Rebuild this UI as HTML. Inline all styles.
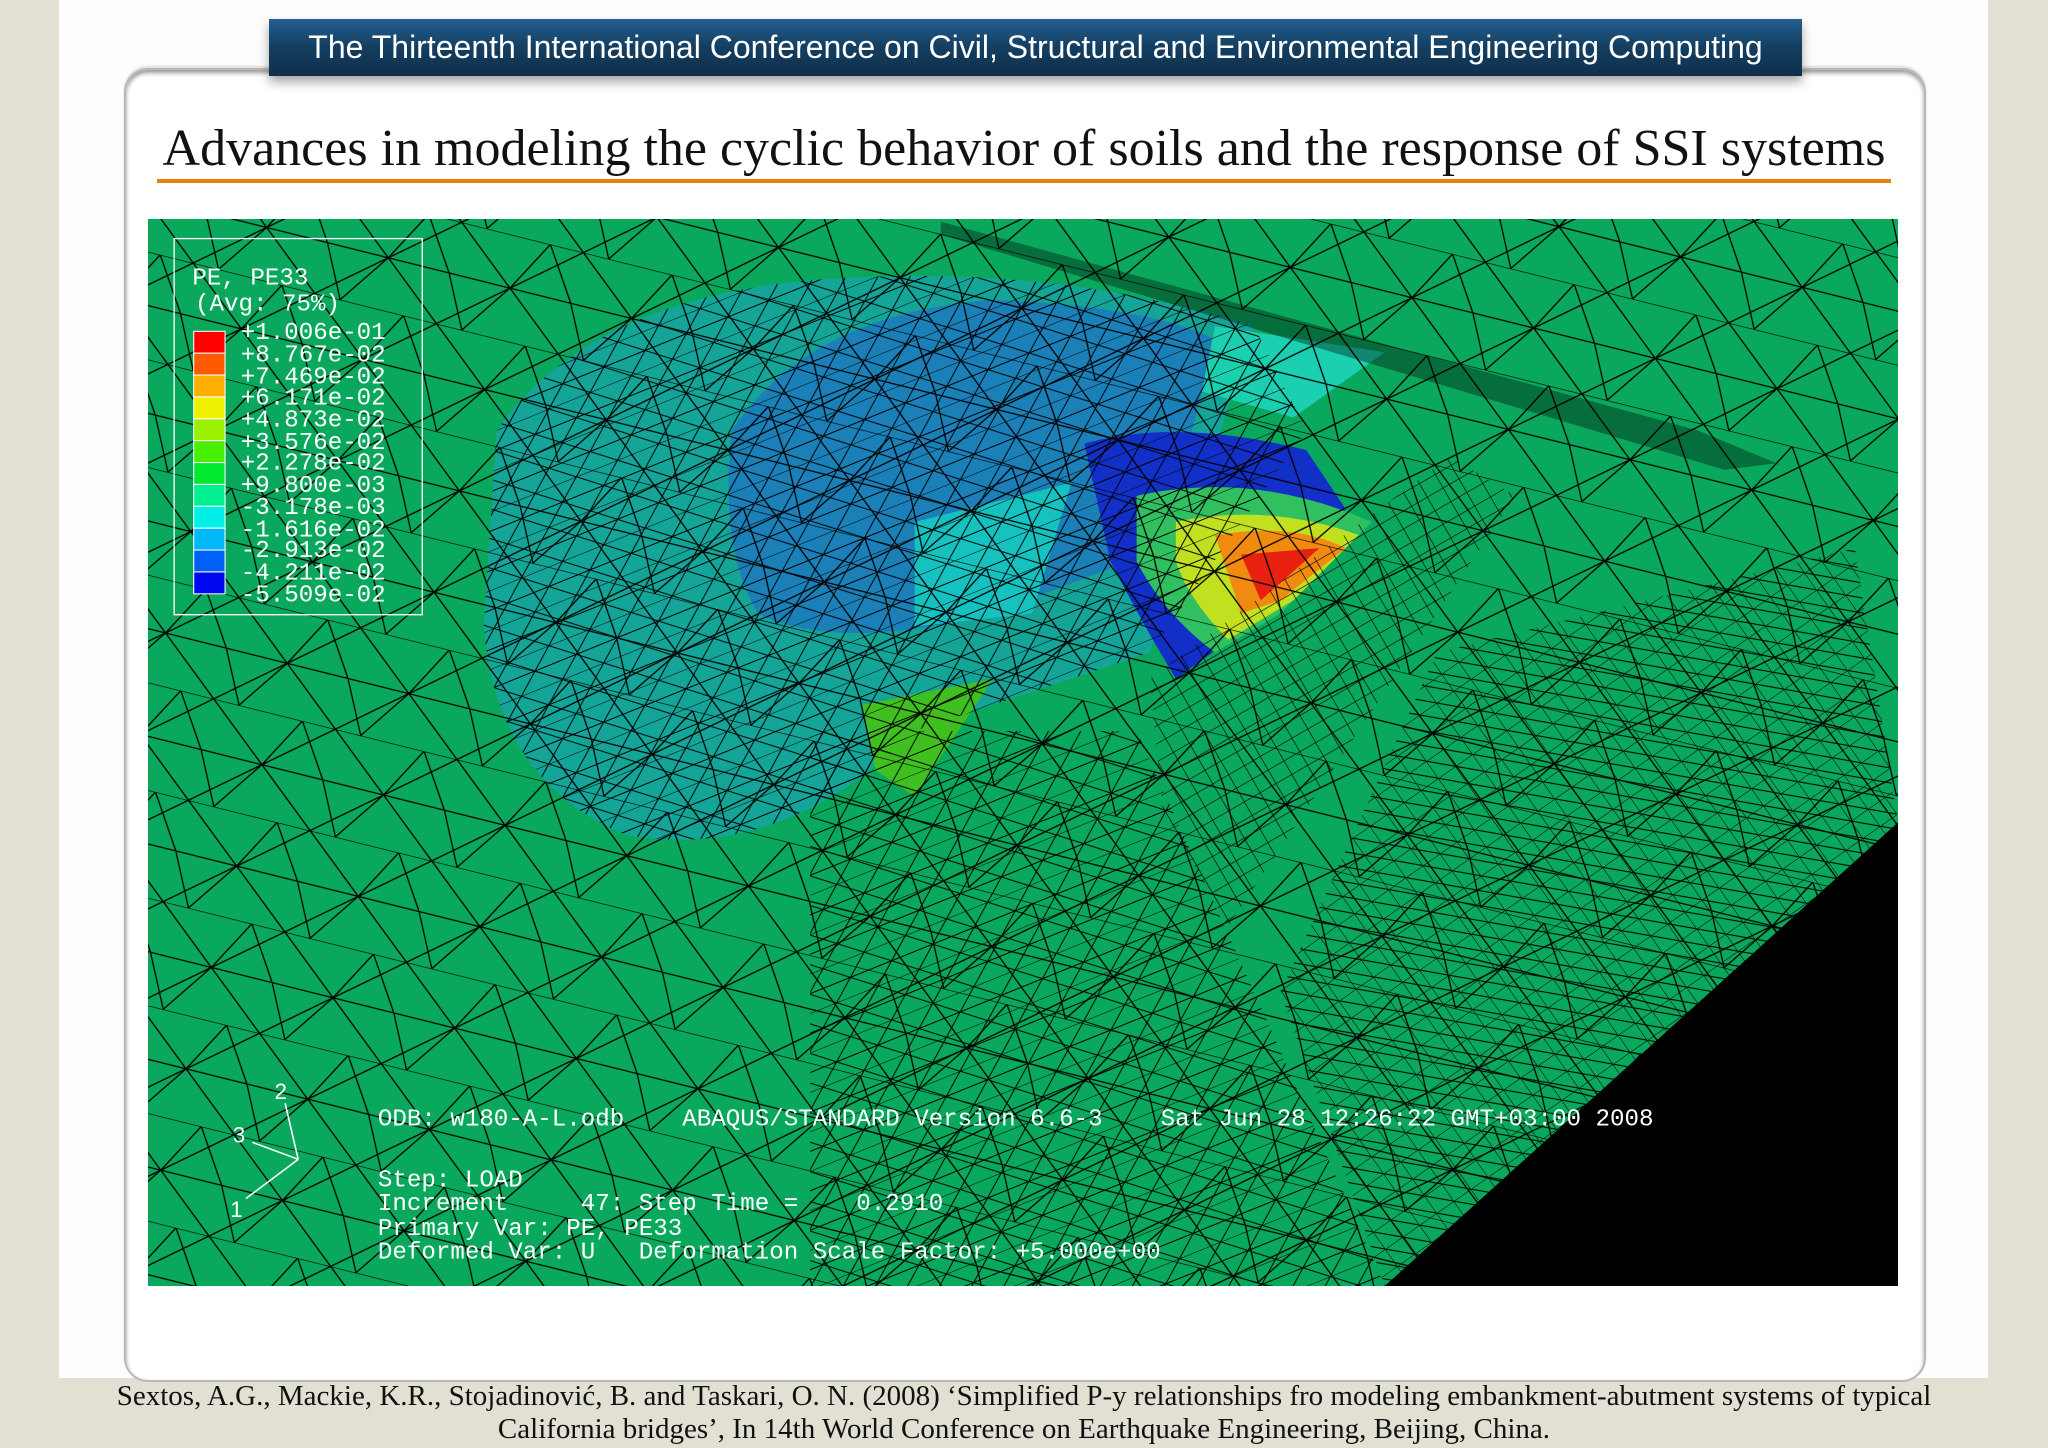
<!DOCTYPE html>
<html><head><meta charset="utf-8"><style>
html,body{margin:0;padding:0}
body{width:2048px;height:1448px;background:#e2dfd3;position:relative;overflow:hidden;font-family:"Liberation Sans",sans-serif}
.page{position:absolute;left:59px;top:0;width:1929px;height:1448px;background:#fdfdfd}
.card{position:absolute;left:124px;top:68px;width:1798px;height:1310px;background:#fff;border:2px solid #b8b8b8;border-radius:24px;box-shadow:0 3px 4px #999 inset, 0 -2px 2px #ddd}
.hdr{position:absolute;left:269px;top:19px;width:1533px;height:57px;background:linear-gradient(#235f8f,#143e60 50%,#0f2f4a);box-shadow:0 6px 10px rgba(0,0,0,.35);color:#fff;font-size:32px;line-height:57px;text-align:center;white-space:nowrap}
.title{position:absolute;left:124px;top:119px;width:1800px;text-align:center;font-family:"Liberation Serif",serif;font-size:52px;color:#111;white-space:nowrap}
.rule{position:absolute;left:157px;top:179px;width:1734px;height:4px;background:#e8801a}
.cite{position:absolute;left:40px;top:1380px;width:1968px;text-align:center;font-family:"Liberation Serif",serif;font-size:29px;line-height:33px;color:#111;white-space:nowrap}
.bottomgray{position:absolute;left:59px;top:1378px;width:1929px;height:70px;background:#e2dfd3}
</style></head><body>
<div class="page"></div>
<div class="bottomgray"></div>
<div class="card"></div>
<div class="hdr">The Thirteenth International Conference on Civil, Structural and Environmental Engineering Computing</div>
<div class="title">Advances in modeling the cyclic behavior of soils and the response of SSI systems</div>
<div class="rule"></div>
<svg style="position:absolute;left:148px;top:219px" width="1750" height="1067" viewBox="113 168 1340 817" preserveAspectRatio="none">
<defs>
<pattern id="m1" width="96" height="80" patternUnits="userSpaceOnUse" patternTransform="rotate(14)">
<path d="M0 0H96M0 40H96M0 0L48 40L96 0M0 80L48 40L96 80M48 40L20 80M48 40L70 0M0 40L20 80M96 40L70 0" stroke="#000" stroke-width="1" fill="none"/>
</pattern>
<pattern id="m2" width="34" height="28" patternUnits="userSpaceOnUse" patternTransform="rotate(-22)">
<path d="M0 0H34M0 14H34M0 0L17 14L34 0M0 28L17 14L34 28" stroke="#000" stroke-width=".8" fill="none"/>
</pattern>
<pattern id="m3" width="16" height="16" patternUnits="userSpaceOnUse" patternTransform="rotate(-35)">
<path d="M0 0H16V16M0 0L16 16" stroke="#000" stroke-width=".8" fill="none"/>
</pattern>
<pattern id="m4" width="14" height="12" patternUnits="userSpaceOnUse" patternTransform="rotate(-30)">
<path d="M0 0H14V12" stroke="#000" stroke-width="1" fill="none"/>
</pattern>
</defs>
<rect x="113" y="168" width="1340" height="817" fill="#0aa85c"/>
<path d="M380 330 Q450 230 620 215 Q800 200 960 250 L880 500 L700 560 Q600 660 480 640 Q380 600 370 480Z" fill="#14a598"/>
<path d="M560 330 Q620 240 760 230 Q880 235 930 260 L890 420 L760 470 Q640 500 580 470 Q550 420 560 330Z" fill="#1b7fb8"/>
<path d="M700 400 L820 370 L790 470 L700 480Z" fill="#16c2c0"/>
<path d="M930 250 L1060 270 L990 320 L920 300Z" fill="#1ad0b0"/>
<path d="M830 340 Q900 320 1000 345 L1030 390 L970 470 L900 520 Q870 470 850 430Z" fill="#1230c8"/>
<path d="M870 380 Q960 360 1050 400 L980 470 L930 500 Q890 470 870 430Z" fill="#30c060"/>
<path d="M900 400 Q970 385 1040 410 L990 460 L940 490 Q910 460 900 430Z" fill="#c0e020"/>
<path d="M930 410 Q990 400 1030 420 L980 460 L950 470Z" fill="#f08a10"/>
<path d="M950 425 L1010 420 L965 460Z" fill="#e82010"/>
<path d="M660 540 L760 520 L700 610 L670 590Z" fill="#40c020"/>
<rect x="113" y="168" width="1340" height="817" fill="url(#m1)"/>
<path d="M380 330 Q450 230 620 215 Q800 200 960 250 L1000 330 L880 500 L700 560 Q600 660 480 640 Q380 600 370 480Z" fill="url(#m2)"/>
<path d="M620 560 L870 560 L960 760 L1060 985 L620 985Z" fill="url(#m2)"/>
<path d="M1100 500 L1420 420 L1453 630 L1060 985 L980 760Z" fill="url(#m3)"/>
<path d="M880 520 L1110 350 L1160 380 L940 710 L890 620Z" fill="url(#m4)"/>
<path d="M720 170 L1300 330 L1360 355 L1320 360 L720 180Z" fill="#000" opacity=".35"/>
<path d="M1453 630 L1453 985 L1060 985Z" fill="#000"/>
<g stroke="#fff" fill="none" stroke-width="1"><rect x="133" y="183" width="190" height="288"/></g>
<g stroke="#fff" stroke-width=".8">
<rect x="148" y="254" width="24" height="16.75" fill="#f00"/>
<rect x="148" y="270.75" width="24" height="16.75" fill="#ff5a00"/>
<rect x="148" y="287.5" width="24" height="16.75" fill="#ffae00"/>
<rect x="148" y="304.25" width="24" height="16.75" fill="#eef000"/>
<rect x="148" y="321" width="24" height="16.75" fill="#9af000"/>
<rect x="148" y="337.75" width="24" height="16.75" fill="#48f000"/>
<rect x="148" y="354.5" width="24" height="16.75" fill="#00e830"/>
<rect x="148" y="371.25" width="24" height="16.75" fill="#00f090"/>
<rect x="148" y="388" width="24" height="16.75" fill="#00f0e8"/>
<rect x="148" y="404.75" width="24" height="16.75" fill="#00b8f8"/>
<rect x="148" y="421.5" width="24" height="16.75" fill="#0060f8"/>
<rect x="148" y="438.25" width="24" height="16.75" fill="#0008f0"/>
</g>
<g fill="#fff" font-family="Liberation Mono,monospace" font-size="18.5">
<text x="147" y="218">PE,&#160;PE33</text>
<text x="149" y="238">(Avg:&#160;75%)</text>
<text x="184" y="260">+1.006e-01</text><text x="184" y="277">+8.767e-02</text><text x="184" y="294">+7.469e-02</text><text x="184" y="310">+6.171e-02</text><text x="184" y="327">+4.873e-02</text><text x="184" y="344">+3.576e-02</text><text x="184" y="360">+2.278e-02</text><text x="184" y="377">+9.800e-03</text><text x="184" y="394">-3.178e-03</text><text x="184" y="411">-1.616e-02</text><text x="184" y="427">-2.913e-02</text><text x="184" y="444">-4.211e-02</text><text x="184" y="461">-5.509e-02</text>
</g>
<g fill="#fff" font-family="Liberation Mono,monospace" font-size="18.5">
<text x="289" y="862">ODB:&#160;w180-A-L.odb&#160;&#160;&#160;&#160;ABAQUS/STANDARD&#160;Version&#160;6.6-3&#160;&#160;&#160;&#160;Sat&#160;Jun&#160;28&#160;12:26:22&#160;GMT+03:00&#160;2008</text>
<text x="289" y="909">Step:&#160;LOAD</text>
<text x="289" y="927">Increment&#160;&#160;&#160;&#160;&#160;47:&#160;Step&#160;Time&#160;=&#160;&#160;&#160;&#160;0.2910</text>
<text x="289" y="946">Primary&#160;Var:&#160;PE,&#160;PE33</text>
<text x="289" y="964">Deformed&#160;Var:&#160;U&#160;&#160;&#160;Deformation&#160;Scale&#160;Factor:&#160;+5.000e+00</text>
</g>
<g stroke="#fff" stroke-width="1.2" fill="none"><path d="M228 888 L218 845 M228 888 L193 875 M228 888 L188 918"/></g>
<g fill="#fff" font-family="Liberation Sans,sans-serif" font-size="17"><text x="210" y="842">2</text><text x="178" y="875">3</text><text x="176" y="932">1</text></g>
</svg>
<div class="cite">Sextos, A.G., Mackie, K.R., Stojadinović, B. and Taskari, O. N. (2008) ‘Simplified P-y relationships fro modeling embankment-abutment systems of typical<br>California bridges’, In 14th World Conference on Earthquake Engineering, Beijing, China.</div>
</body></html>
